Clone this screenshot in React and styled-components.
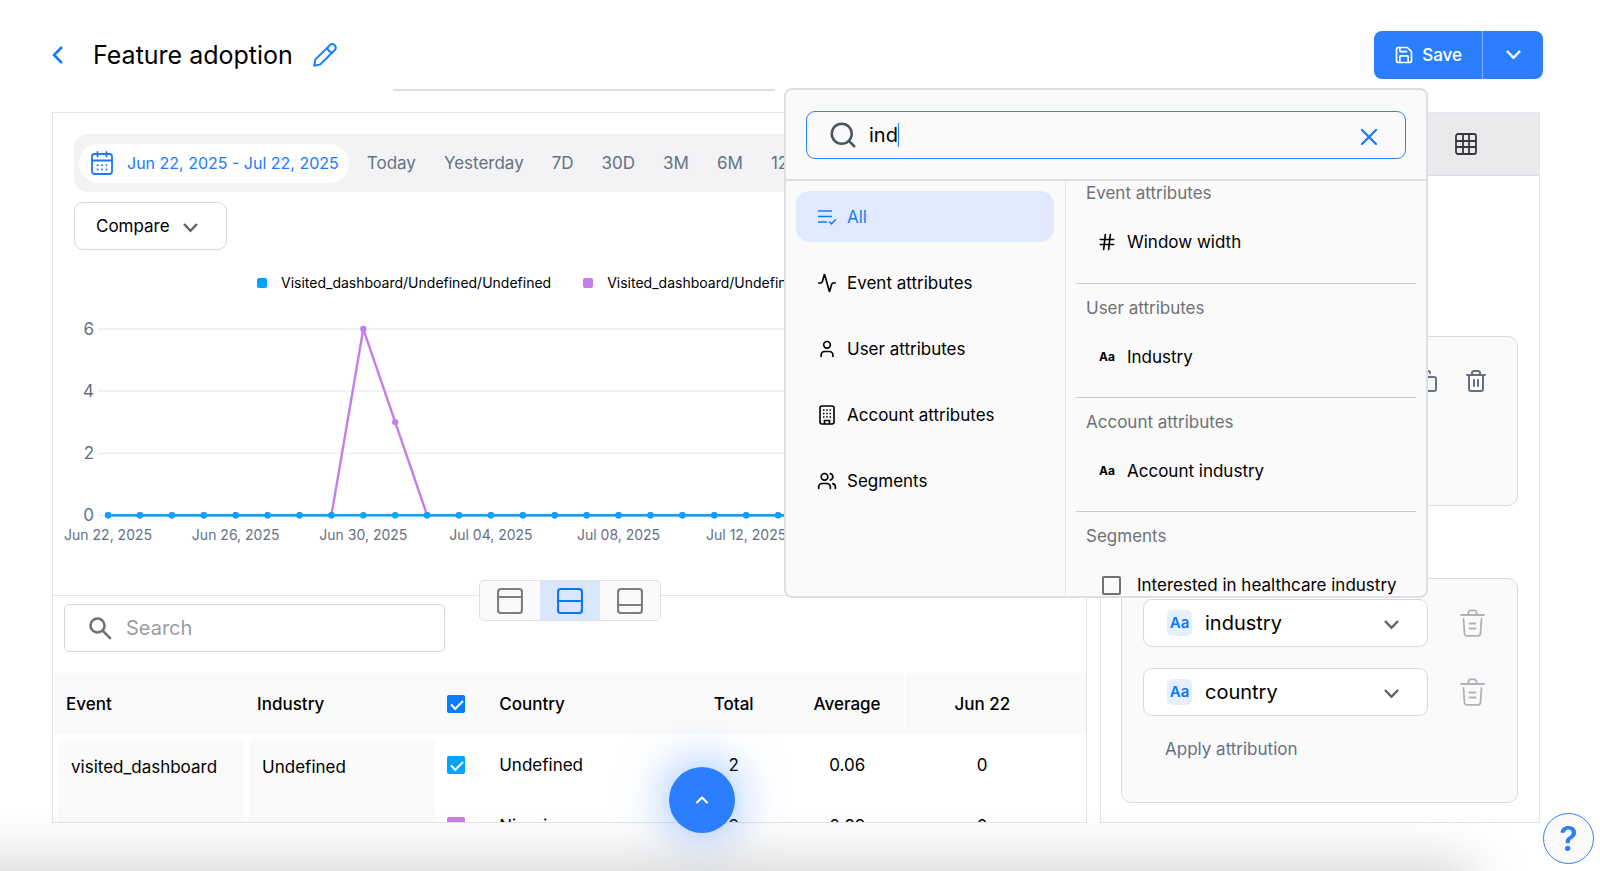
import React, { Fragment } from 'react';
import styled, { createGlobalStyle } from 'styled-components';
import {
    Activity,
    ChevronUp,
    Copy,
    Hash,
    Save,
    Search,
    Trash2,
    User,
    Users,
    X,
} from 'lucide-react';

const GlobalStyle = createGlobalStyle`
    * {
        box-sizing: border-box;
    }

    body {
        margin: 0;
        background: #fff;
        color: #000;
        font-family: Inter, "Liberation Sans", sans-serif;
        font-size: 17px;
        line-height: 24px;
        overflow: hidden;
    }

    button, input {
        font: inherit;
        color: inherit;
        margin: 0;
    }

    button {
        padding: 0;
        border: 0;
        background: none;
        cursor: pointer;
    }

    svg {
        display: block;
        flex: none;
    }
`;

const Page = styled.div`
    display: flex;
    flex-direction: column;
    height: 100vh;
    padding: 0 60px 48px 52px;
`;

const Header = styled.header`
    display: flex;
    align-items: center;
    flex: none;
    height: 112px;
    padding-bottom: 2px;
    margin-right: -3px;
`;

const BackButton = styled.button`
    color: #1a7aff;
`;

const Title = styled.h1`
    margin: 0 20px 0 30px;
    font-size: 25px;
    line-height: 32px;
    font-weight: 400;
`;

const EditButton = styled.button`
    color: #1a7aff;
`;

const SaveGroup = styled.div`
    display: flex;
    height: 48px;
    margin-left: auto;
    border-radius: 8px;
    background: #2b7fff;
    color: #fff;
`;

const SaveButton = styled.button`
    display: flex;
    align-items: center;
    gap: 8px;
    padding: 0 20px;
    border-right: 1px solid #7fb2ff;
    font-weight: 500;
`;

const SaveMenuButton = styled.button`
    display: grid;
    place-items: center;
    width: 60px;
`;

const Columns = styled.main`
    display: flex;
    flex: 1;
    gap: 13px;
    min-height: 0;
`;

const Report = styled.section`
    display: flex;
    flex-direction: column;
    flex: 1;
    min-width: 0;
    border: 1px solid #e3e5ea;
    overflow: hidden;
`;

const ChartArea = styled.div`
    position: relative;
    flex: none;
    height: 483px;
    padding-top: 21px;
    border-bottom: 1px solid #e3e5ea;
`;

const RangeBar = styled.div`
    display: flex;
    align-items: center;
    gap: 28px;
    height: 58px;
    margin: 0 20px 10px 21px;
    padding: 0 5px;
    border-radius: 14px;
    background: #f3f3f6;
    color: #667085;
    white-space: nowrap;
`;

const RangePicker = styled.button`
    display: flex;
    align-items: center;
    gap: 14px;
    height: 39px;
    padding: 0 10px 0 12px;
    margin-right: -10px;
    border-radius: 20px;
    background: #fff;
    color: #1a7aff;
    font-size: 16px;
`;

const CompareButton = styled.button`
    display: flex;
    align-items: center;
    gap: 13px;
    height: 48px;
    margin-left: 21px;
    padding: 0 28px 0 21px;
    border: 1px solid #d6d8dc;
    border-radius: 9px;

    svg {
        margin-top: 4px;
        color: #5f6368;
    }
`;

const Legend = styled.div`
    display: flex;
    align-items: center;
    gap: 32px;
    margin: 23px 0 0 204px;
    font-size: 14px;
    line-height: 20px;
    white-space: nowrap;
`;

const LegendItem = styled.span`
    display: flex;
    align-items: center;
    gap: 14px;

    &::before {
        content: '';
        width: 10px;
        height: 10px;
        border-radius: 2px;
        background: ${({ $color }) => $color};
    }
`;

const ChartSvg = styled.svg`
    width: 100%;
    height: auto;
    margin-top: 16px;

    text {
        fill: #667085;
        font-size: 14px;
    }

    text.value {
        font-size: 17px;
    }
`;

const LayoutSwitch = styled.div`
    position: absolute;
    left: 50%;
    bottom: -26px;
    z-index: 1;
    display: flex;
    height: 41px;
    transform: translateX(-50%);
    border: 1px solid #dfe1e5;
    border-radius: 5px;
    background: #fafafa;
    overflow: hidden;
`;

const LayoutButton = styled.button`
    display: grid;
    place-items: center;
    width: 60px;
    background: ${({ $active }) => ($active ? '#d9e6fe' : 'transparent')};
    color: ${({ $active }) => ($active ? '#0a75ff' : '#7b7e85')};
`;

const TableSearch = styled.label`
    display: flex;
    align-items: center;
    flex: none;
    gap: 12px;
    width: 381px;
    height: 48px;
    margin: 8px 0 21px 11px;
    padding-left: 24px;
    border: 1px solid #d3d5da;
    border-radius: 5px;

    input {
        flex: 1;
        min-width: 0;
        border: 0;
        outline: 0;
        background: none;
        font-size: 20px;
    }

    input::placeholder {
        color: #9b9ea5;
    }
`;

const TableWrap = styled.div`
    flex: 1;
    min-height: 0;
    overflow: hidden;
`;

const Table = styled.table`
    width: 100%;
    table-layout: fixed;
    border-collapse: collapse;

    th {
        height: 61px;
        padding: 0;
        background: #fafafa;
        font-weight: 500;
        text-align: left;
    }

    td {
        height: 61px;
        padding: 0;
    }

    th.event {
        padding-left: 13px;
    }

    th.number, td.number {
        text-align: center;
    }

    th.day, td.day {
        padding-right: 26px;
    }

    th.day {
        border-left: 1px solid #fff;
    }
`;

const GroupCell = styled.td`
    vertical-align: top;

    div {
        height: 116px;
        margin: 5px 0 0 5px;
        padding: 16px 13px;
        border-radius: 5px;
        background: #fafafa;
    }
`;

const Tick = styled.input`
    appearance: none;
    display: block;
    width: 18px;
    height: 18px;
    margin: 0 0 0 12px;
    border-radius: 2px;
    background: ${({ $color }) => $color};

    &::after {
        content: '';
        display: block;
        width: 10px;
        height: 5px;
        margin: 5px 0 0 4px;
        border: solid #fff;
        border-width: 0 0 2px 2px;
        transform: rotate(-45deg);
    }
`;

const Settings = styled.aside`
    display: flex;
    flex-direction: column;
    flex: none;
    width: 440px;
    border: 1px solid #e3e5ea;
`;

const SettingsTabs = styled.div`
    display: flex;
    justify-content: flex-end;
    align-items: center;
    height: 63px;
    padding-right: 62px;
    border-bottom: 1px solid #d9dbe0;
    background: #e9eaec;
    color: #36383c;
`;

const Card = styled.div`
    margin: ${({ $top }) => $top}px 21px 0 20px;
    height: ${({ $height }) => $height}px;
    padding: 20px 21px;
    border: 1px solid #d9dbe0;
    border-radius: 10px;
    background: #fafafa;
`;

const CardActions = styled.div`
    display: flex;
    justify-content: flex-end;
    gap: 26px;
    padding: 12px 8px 0 0;
    color: #667085;
`;

const Breakdown = styled.div`
    display: flex;
    align-items: center;
    gap: 32px;
    margin-bottom: 21px;
    padding-right: 11px;
    color: #afb2b8;
`;

const PropertyPicker = styled.button`
    display: flex;
    align-items: center;
    flex: 1;
    height: 48px;
    padding: 0 28px 0 23px;
    border: 1px solid #d6d8dc;
    border-radius: 9px;
    background: #fff;
    color: #000;
    font-size: 20px;

    svg {
        margin: 4px 0 0 auto;
        color: #5f6368;
    }
`;

const TypeTag = styled.span`
    margin-right: 13px;
    width: 25px;
    border-radius: 5px;
    background: #e5effe;
    color: #0a75ff;
    font-size: 15px;
    line-height: 26px;
    font-weight: 600;
    text-align: center;
`;

const ApplyButton = styled.button`
    margin-left: 22px;
    color: #667085;
`;

const Handle = styled.div`
    position: absolute;
    top: 89px;
    left: 393px;
    width: 382px;
    height: 2px;
    background: #dcdfe4;
`;

const Popup = styled.div`
    position: absolute;
    top: 88px;
    right: 172px;
    z-index: 2;
    display: flex;
    flex-direction: column;
    width: 644px;
    height: 510px;
    border: 2px solid #dcdfe4;
    border-radius: 8px;
    background: #fafafa;
    overflow: hidden;
`;

const PopupSearch = styled.div`
    flex: none;
    padding: 21px 20px 20px;
    border-bottom: 2px solid #dcdfe4;
`;

const PopupField = styled.div`
    display: flex;
    align-items: center;
    height: 48px;
    padding: 0 22px 0 21px;
    border: 1px solid #2b7fff;
    border-radius: 9px;

    input {
        field-sizing: content;
        margin-left: 11px;
        padding: 0;
        border: 0;
        outline: 0;
        background: none;
        font-size: 20px;
    }

    button {
        margin-left: auto;
        padding-top: 4px;
        color: #1a7aff;
    }

    > svg {
        color: #4b5360;
    }
`;

const Caret = styled.span`
    width: 1px;
    height: 24px;
    background: #2b7fff;
`;

const PopupBody = styled.div`
    display: flex;
    flex: 1;
    min-height: 0;
`;

const Categories = styled.nav`
    display: flex;
    flex-direction: column;
    gap: 15px;
    flex: none;
    width: 280px;
    padding: 10px 11px 0 10px;
    border-right: 1px solid #e3e5ea;
`;

const Category = styled.button`
    display: flex;
    align-items: center;
    gap: 10px;
    height: 51px;
    padding-left: 21px;
    border-radius: 14px;
    background: ${({ $active }) => ($active ? '#e1eafd' : 'transparent')};
    color: ${({ $active }) => ($active ? '#1a7aff' : 'inherit')};
`;

const Results = styled.div`
    flex: 1;
    min-width: 0;
    padding: 0 10px;
    overflow: hidden;
`;

const ResultGroup = styled.section`
    height: 114px;
    border-bottom: 1px solid #c9ccd2;

    &:first-child {
        height: 103px;
    }

    &:first-child h2 {
        padding-top: 0;
    }

    &:last-child {
        border: 0;
    }
`;

const GroupName = styled.h2`
    margin: 0;
    padding: 12px 10px 0;
    color: #6f7177;
    font-size: 17px;
    line-height: 24px;
    font-weight: 400;
`;

const Result = styled.button`
    display: flex;
    align-items: center;
    gap: 10px;
    height: 48px;
    margin-top: 13px;
    padding-left: 21px;
    white-space: nowrap;
`;

const TypeMark = styled.span`
    width: 20px;
    font-size: 12px;
    font-weight: 700;
`;

const SegmentOption = styled.label`
    display: flex;
    align-items: center;
    gap: 16px;
    height: 48px;
    margin-top: 13px;
    padding-left: 26px;
    white-space: nowrap;

    input {
        appearance: none;
        width: 19px;
        height: 19px;
        border: 2px solid #6f7177;
        border-radius: 2px;
    }
`;

const ExpandButton = styled.button`
    position: absolute;
    left: 669px;
    bottom: 38px;
    z-index: 1;
    display: grid;
    place-items: center;
    width: 66px;
    height: 66px;
    border-radius: 50%;
    background: #2b7fff;
    color: #fff;
    box-shadow: 0 0 50px rgba(43, 127, 255, 0.6);
`;

const HelpButton = styled.button`
    position: absolute;
    right: 6px;
    bottom: 7px;
    width: 51px;
    height: 51px;
    border: 1px solid #2b7fff;
    border-radius: 50%;
    background: #fafafa;
    color: #2b7fff;
    font-size: 34px;
    font-weight: 600;
`;

const BottomShade = styled.div`
    position: fixed;
    left: -60px;
    right: 130px;
    bottom: -40px;
    height: 40px;
    box-shadow: 0 0 60px rgba(0, 0, 0, 0.26);
    pointer-events: none;
`;

const ranges = ['Today', 'Yesterday', '7D', '30D', '3M', '6M', '12M'];

const days = [
    'Jun 22, 2025', 'Jun 26, 2025', 'Jun 30, 2025', 'Jul 04, 2025',
    'Jul 08, 2025', 'Jul 12, 2025', 'Jul 16, 2025', 'Jul 20, 2025',
];

const undefinedSeries = Array(31).fill(0);
const nigeriaSeries = undefinedSeries.map((n, i) => (i === 8 ? 6 : i === 9 ? 3 : 0));

const rows = [
    { country: 'Undefined', color: '#05a3ff', total: '2', average: '0.06', day: '0' },
    { country: 'Nigeria', color: '#c47ee8', total: '9', average: '0.29', day: '0' },
];

const pointX = (i) => 55 + i * 31.875;
const pointY = (n) => 206 - n * 31;
const toPoints = (series) => series.map((n, i) => `${pointX(i)},${pointY(n)}`).join(' ');

const PencilIcon = () => (
    <svg width="24" height="24" viewBox="0 0 24 24" fill="none" stroke="currentColor" strokeWidth="2" strokeLinejoin="round">
        <path d="M1.2 22.8l1.2-6.4L17.2 1.9a2.8 2.8 0 0 1 4 0l.8.8a2.8 2.8 0 0 1 0 4L7.3 21.4z" />
        <path d="M14.4 4.8c.6 2.8 2 4.2 4.8 4.8" />
    </svg>
);

const CalendarIcon = () => (
    <svg width="22" height="24" viewBox="0 0 22 24" fill="none" stroke="currentColor" strokeWidth="1.8" strokeLinecap="round">
        <rect x="1" y="3" width="20" height="20" rx="2.5" />
        <path d="M1 9.5h20M6.5 1v4.5M15.5 1v4.5" />
        <path d="M6.5 14.2h.01M11 14.2h.01M15.5 14.2h.01M6.5 18.5h.01M11 18.5h.01M15.5 18.5h.01" strokeWidth="2" />
    </svg>
);

const Arrow = () => (
    <svg width="15" height="10" viewBox="0 0 15 10" fill="none" stroke="currentColor" strokeWidth="2.4">
        <path d="M1 1l6.5 6.8L14 1" />
    </svg>
);

const GridIcon = () => (
    <svg width="22" height="22" viewBox="0 0 22 22" fill="none" stroke="currentColor" strokeWidth="1.8">
        <rect x="1" y="1" width="20" height="20" rx="2" />
        <path d="M8 1v20M14 1v20M1 8h20M1 14h20" />
    </svg>
);

const SplitIcon = ({ line }) => (
    <svg width="26" height="26" viewBox="0 0 26 26" fill="none" stroke="currentColor" strokeWidth="2.2">
        <rect x="1" y="1" width="24" height="24" rx="3" />
        <path d={`M1 ${line}h24`} />
    </svg>
);

const TableSearchIcon = () => (
    <svg width="23" height="23" viewBox="0 0 23 23" fill="none" stroke="#6f7177" strokeWidth="2.6">
        <circle cx="8.5" cy="8.5" r="7" />
        <path d="M13.5 13.5l8.3 8.3" />
    </svg>
);

const ListCheckIcon = () => (
    <svg width="20" height="20" viewBox="0 0 20 20" fill="none" stroke="currentColor" strokeWidth="1.6">
        <path d="M1 4h14M1 9.5h14M1 15h9M12 14.5l2.4 2.4 4.6-4.6" />
    </svg>
);

const BuildingIcon = () => (
    <svg width="20" height="20" viewBox="0 0 20 20" fill="none" stroke="currentColor" strokeWidth="1.6">
        <rect x="3" y="1" width="14" height="18" rx="2" />
        <path d="M7.5 19v-3.5h5V19" />
        <path d="M6 5h1.5M9.2 5h1.5M12.5 5H14M6 8.5h1.5M9.2 8.5h1.5M12.5 8.5H14M6 12h1.5M9.2 12h1.5M12.5 12H14" />
    </svg>
);

const BinIcon = () => (
    <svg width="25" height="28" viewBox="0 0 25 28" fill="none" stroke="currentColor" strokeWidth="1.8" strokeLinecap="round">
        <path d="M1 6h23M8 5.5l.8-3q.3-1.2 1.5-1.2h4.4q1.2 0 1.5 1.2l.8 3" />
        <path d="M3.5 10l1 14.5q.2 2.3 2.3 2.3h11.4q2.1 0 2.3-2.3l1-14.5" />
        <path d="M9.5 14.5h6M9.5 19.5h6" />
    </svg>
);

const Chart = () => (
    <ChartSvg viewBox="0 0 1032 240" role="img" aria-label="Visited_dashboard by day">
        {[6, 4, 2, 0].map((n) => (
            <g key={n}>
                <path d={`M45 ${pointY(n)}H1022`} stroke="#e6e7ea" />
                <text className="value" x="41" y={pointY(n) + 6} textAnchor="end">{n}</text>
            </g>
        ))}
        {days.map((day, i) => (
            <text key={day} x={pointX(i * 4)} y="231" textAnchor="middle">{day}</text>
        ))}
        <polyline points={toPoints(nigeriaSeries)} fill="none" stroke="#c47ee8" strokeWidth="2.4" />
        {nigeriaSeries.map((n, i) => (
            <circle key={i} cx={pointX(i)} cy={pointY(n)} r="3.2" fill="#c47ee8" />
        ))}
        <polyline points={toPoints(undefinedSeries)} fill="none" stroke="#05a3ff" strokeWidth="2.4" />
        {undefinedSeries.map((n, i) => (
            <circle key={i} cx={pointX(i)} cy={pointY(n)} r="3.2" fill="#05a3ff" />
        ))}
    </ChartSvg>
);

const Col = styled.col`
    width: ${({ $width }) => $width};
`;

const EventTable = () => (
    <Table>
        <colgroup>
            <Col $width="18.5%" />
            <Col $width="18.5%" />
            <Col $width="6.2%" />
            <Col $width="17.2%" />
            <Col $width="11%" />
            <Col $width="11%" />
            <Col />
        </colgroup>
        <thead>
            <tr>
                <th className="event">Event</th>
                <th className="event">Industry</th>
                <th><Tick type="checkbox" aria-label="All countries" defaultChecked $color="#0a7cff" /></th>
                <th>Country</th>
                <th className="number">Total</th>
                <th className="number">Average</th>
                <th className="number day">Jun 22</th>
            </tr>
        </thead>
        <tbody>
            {rows.map((row, i) => (
                <tr key={row.country}>
                    {i === 0 && (
                        <Fragment>
                            <GroupCell rowSpan={2}><div>visited_dashboard</div></GroupCell>
                            <GroupCell rowSpan={2}><div>Undefined</div></GroupCell>
                        </Fragment>
                    )}
                    <td><Tick type="checkbox" aria-label={row.country} defaultChecked $color={row.color} /></td>
                    <td>{row.country}</td>
                    <td className="number">{row.total}</td>
                    <td className="number">{row.average}</td>
                    <td className="number day">{row.day}</td>
                </tr>
            ))}
        </tbody>
    </Table>
);

const AttributePopup = () => (
    <Popup role="dialog" aria-label="Attributes">
        <PopupSearch>
            <PopupField>
                <Search size={30} strokeWidth={2} />
                <input aria-label="Search attributes" defaultValue="ind" />
                <Caret />
                <button aria-label="Clear"><X size={28} strokeWidth={2} /></button>
            </PopupField>
        </PopupSearch>
        <PopupBody>
            <Categories>
                <Category $active><ListCheckIcon />All</Category>
                <Category><Activity size={20} />Event attributes</Category>
                <Category><User size={20} />User attributes</Category>
                <Category><BuildingIcon />Account attributes</Category>
                <Category><Users size={20} />Segments</Category>
            </Categories>
            <Results>
                <ResultGroup>
                    <GroupName>Event attributes</GroupName>
                    <Result><Hash size={20} />Window width</Result>
                </ResultGroup>
                <ResultGroup>
                    <GroupName>User attributes</GroupName>
                    <Result><TypeMark>Aa</TypeMark>Industry</Result>
                </ResultGroup>
                <ResultGroup>
                    <GroupName>Account attributes</GroupName>
                    <Result><TypeMark>Aa</TypeMark>Account industry</Result>
                </ResultGroup>
                <ResultGroup>
                    <GroupName>Segments</GroupName>
                    <SegmentOption><input type="checkbox" />Interested in healthcare industry</SegmentOption>
                </ResultGroup>
            </Results>
        </PopupBody>
    </Popup>
);

const App = () => (
    <Fragment>
        <GlobalStyle />
        <BottomShade />
        <Page>
            <Header>
                <BackButton aria-label="Back">
                    <svg width="11" height="18" viewBox="0 0 11 18" fill="none" stroke="currentColor" strokeWidth="2.6">
                        <path d="M10 1L2 9l8 8" />
                    </svg>
                </BackButton>
                <Title>Feature adoption</Title>
                <EditButton aria-label="Rename"><PencilIcon /></EditButton>
                <SaveGroup>
                    <SaveButton><Save size={20} strokeWidth={2} />Save</SaveButton>
                    <SaveMenuButton aria-label="More save options">
                        <Arrow />
                    </SaveMenuButton>
                </SaveGroup>
            </Header>
            <Columns>
                <Report>
                    <ChartArea>
                        <RangeBar>
                            <RangePicker><CalendarIcon />Jun 22, 2025 - Jul 22, 2025</RangePicker>
                            {ranges.map((range) => <button key={range}>{range}</button>)}
                        </RangeBar>
                        <CompareButton>Compare<Arrow /></CompareButton>
                        <Legend>
                            <LegendItem $color="#05a3ff">Visited_dashboard/Undefined/Undefined</LegendItem>
                            <LegendItem $color="#c47ee8">Visited_dashboard/Undefined/Nigeria</LegendItem>
                        </Legend>
                        <Chart />
                        <LayoutSwitch>
                            <LayoutButton aria-label="Chart only"><SplitIcon line={9} /></LayoutButton>
                            <LayoutButton aria-label="Chart and table" $active><SplitIcon line={13} /></LayoutButton>
                            <LayoutButton aria-label="Table only"><SplitIcon line={17} /></LayoutButton>
                        </LayoutSwitch>
                    </ChartArea>
                    <TableSearch>
                        <TableSearchIcon />
                        <input placeholder="Search" aria-label="Search" />
                    </TableSearch>
                    <TableWrap>
                        <EventTable />
                    </TableWrap>
                </Report>
                <Settings>
                    <SettingsTabs><GridIcon /></SettingsTabs>
                    <Card $top={160} $height={170}>
                        <CardActions>
                            <Copy size={24} />
                            <Trash2 size={24} />
                        </CardActions>
                    </Card>
                    <Card $top={72} $height={225}>
                        {['industry', 'country'].map((name) => (
                            <Breakdown key={name}>
                                <PropertyPicker><TypeTag>Aa</TypeTag>{name}<Arrow /></PropertyPicker>
                                <button aria-label={`Remove ${name}`}><BinIcon /></button>
                            </Breakdown>
                        ))}
                        <ApplyButton>Apply attribution</ApplyButton>
                    </Card>
                </Settings>
            </Columns>
        </Page>
        <Handle />
        <AttributePopup />
        <ExpandButton aria-label="Expand"><ChevronUp size={20} strokeWidth={2.4} /></ExpandButton>
        <HelpButton aria-label="Help">?</HelpButton>
    </Fragment>
);

export default App;
